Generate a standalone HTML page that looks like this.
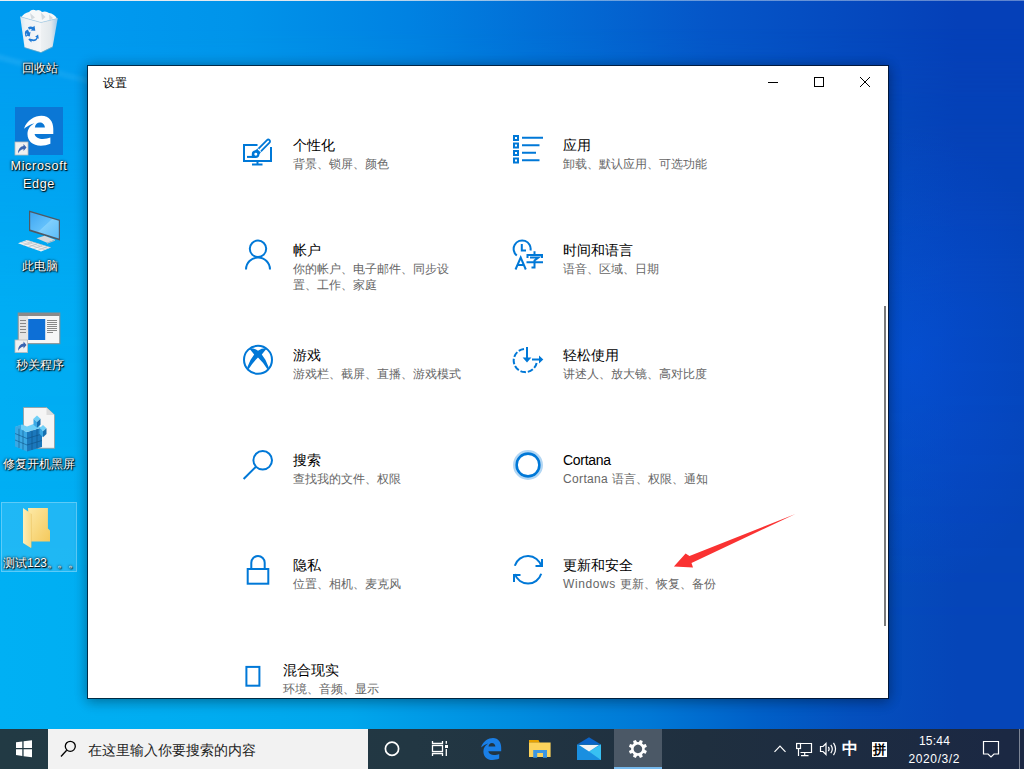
<!DOCTYPE html>
<html><head><meta charset="utf-8">
<style>
*{margin:0;padding:0;box-sizing:border-box}
html,body{width:1024px;height:769px;overflow:hidden}
body{position:relative;font-family:"Liberation Sans",sans-serif;background:#0a6fd6}
#bg{position:absolute;left:0;top:0;width:1024px;height:729px;
 background:linear-gradient(90deg,#009cf0 0px,#009af0 78px,#0094ea 238px,#0082e2 408px,#0556c8 708px,#0540b8 958px,#0540b8 1024px)}
#bg2{position:absolute;left:0;top:0;width:1024px;height:729px;
 background:linear-gradient(90deg,#00b0f4 0px,#00acf0 208px,#00a6ec 350px,#008ee0 508px,#0078d6 650px,#0060c8 758px,#0450be 850px,#0545b8 958px,#0545b8 1024px);
 -webkit-mask-image:linear-gradient(180deg,rgba(0,0,0,0) 28px,rgba(0,0,0,.55) 208px,rgba(0,0,0,.85) 308px,#000 628px,#000 729px);
 mask-image:linear-gradient(180deg,rgba(0,0,0,0) 28px,rgba(0,0,0,.55) 208px,rgba(0,0,0,.85) 308px,#000 628px,#000 729px)}
svg{position:absolute;left:0;top:0;overflow:visible}
#win{position:absolute;left:87px;top:65px;width:802px;height:634px;background:#fff;border:1px solid rgba(0,10,25,.72);background-clip:padding-box;box-shadow:0 0 12px rgba(0,0,0,.24),0 4px 12px rgba(0,0,0,.2)}
.t{position:absolute;white-space:nowrap;color:#000;font-size:14px;line-height:16px}
.s{position:absolute;white-space:nowrap;color:#666;font-size:12px;line-height:16px;margin-top:1px}
#taskbar{position:absolute;left:0;top:729px;width:1024px;height:40px;background:linear-gradient(90deg,#223a44 0px,#223743 414px,#1f2f3f 704px,#1b2843 1004px)}
.dl{position:absolute;color:#fff;font-size:12px;line-height:17px;text-align:center;text-shadow:0 0 2px rgba(0,0,0,.9),1px 1px 1px #000,0 0 3px rgba(0,0,0,.6);white-space:nowrap}
i{font-style:normal;display:inline-block;width:1em;text-align:center}
</style></head><body>
<div id="bg"></div><div id="bg2"></div><div style="position:absolute;left:0;top:0;width:1024px;height:729px;background:radial-gradient(ellipse 150px 230px at 915px 360px,rgba(6,84,230,.45),rgba(6,84,230,0))"></div>
<!-- DESKTOP ICONS -->
<div style="position:absolute;left:-20px;top:49px;width:140px;height:6px;background:linear-gradient(90deg,rgba(150,220,255,.14),rgba(150,220,255,.07));filter:blur(1.5px);transform:rotate(15deg);transform-origin:0 0"></div>
<div style="position:absolute;left:0;top:0;width:1024px;height:1px;background:linear-gradient(90deg,#e8eef2 0px,#dfe7ee 300px,rgba(200,215,235,.55) 600px,rgba(200,215,235,.45) 1024px)"></div>
<div style="position:absolute;left:1px;top:502px;width:76px;height:70px;background:rgba(255,255,255,.12);border:1px solid rgba(255,255,255,.28)"></div>
<svg width="1024" height="769" viewBox="0 0 1024 769">
 <!-- recycle bin -->
 <defs>
  <linearGradient id="rbl" x1="0" x2="1" y1="0" y2="0"><stop offset="0" stop-color="#d6e6f0"/><stop offset=".25" stop-color="#eef2f5"/><stop offset="1" stop-color="#f4f6f8"/></linearGradient>
  <linearGradient id="rbr" x1="0" x2="1" y1="0" y2="0"><stop offset="0" stop-color="#eef1f3"/><stop offset=".6" stop-color="#e2e8ec"/><stop offset="1" stop-color="#9cc8ea"/></linearGradient>
 </defs>
 <path fill="url(#rbl)" d="M20.2,16.7 L41,22.5 V52.3 L24.5,47.2 Z"/>
 <path fill="url(#rbr)" d="M41,22.5 L57.7,18.5 L52.7,46.6 L41,52.3 Z"/>
 <path fill="#f6f8f9" d="M21.5,17 Q24,13 29,12 Q32,8.5 36,10.5 Q39.5,9 42,12 Q46,10.5 49,13 Q54,13.5 57,18.5 L41,22.5 Z"/>
 <path fill="#d3dadf" d="M30,13 L35,17.5 L31.5,19.5 Z M41,12.5 L45.5,17 L42,20 Z M49,14.5 L53,18 L49.5,20.5 Z"/>
 <path fill="none" stroke="#b8cfe0" stroke-width=".7" d="M20.2,16.7 L41,22.5 L57.7,18.5"/>
 <path fill="#c9b8a8" d="M24.5,47.2 L41,52.3 L52.7,46.6 V47.6 L41,53 L24.5,48 Z" opacity=".5"/>
 <g fill="#1f7ad6">
  <path d="M28,27.2 Q30.5,25.8 33,27 L34.5,25.8 L35.3,30.8 L30.6,30.4 L32,29.2 Q30.3,28.5 29,29.8 Z"/>
  <path d="M25.3,31 L27.8,29.4 L29.3,32.6 L30.5,31.8 L29.8,36.4 L25.9,35.4 L27.3,34.6 Q26.6,33.4 26.6,33 Q25.9,34.8 26.8,37 L25.3,36.2 Q24.2,33.4 25.3,31 Z"/>
  <path d="M29.3,38.6 L33.8,39.4 Q36,39.4 36.6,37.2 L35.1,36.8 L38.1,34.4 L38.8,38.8 L37.6,38.3 Q36.6,41.2 33.4,41.2 L31.5,40.8 V42.4 L28.3,39.6 L31.4,37.2 Z"/>
 </g>
 <!-- edge tile -->
 <rect x="15" y="107" width="48" height="48" fill="#0b77d5"/>
 <path fill="#fff" transform="translate(24,115.8) scale(1.45,1.36) translate(-481,-738)" fill-rule="evenodd" d="M481,747.5 C483,741 488.5,738 493,738 C498.5,738 501.2,742.5 501.2,747.5 L501.2,751.3 L488.3,751.3 C488.8,753.8 491.2,755 494,755 C496,755 497.8,754.6 499.2,754 L499.2,758.6 C497.2,759.6 494.8,760 492.6,760 C487,760 483.4,756.4 483.4,751.4 C483.4,747.6 485.4,745 488.2,743.4 C485.2,744.3 482.6,746 481,747.5 Z M488.5,746.6 L495.4,746.6 C495.3,744.5 493.8,743 491.9,743 C490.1,743 488.8,744.4 488.5,746.6 Z"/>
 <rect x="15" y="142" width="13" height="13" fill="#f0f0f0" stroke="#bbb" stroke-width=".8"/>
 <path fill="#3a64b0" d="M18,153.5 Q18,147 23.5,146 V144 L26.5,147.5 L23.5,151 V149 Q20,149.5 18,153.5 Z"/>
 <!-- this pc -->
 <defs><linearGradient id="scr" x1="0" y1="0" x2="1" y2="1"><stop offset="0" stop-color="#3ea6f2"/><stop offset=".5" stop-color="#62c0fb"/><stop offset=".52" stop-color="#7fcffc"/><stop offset="1" stop-color="#5cbdf8"/></linearGradient></defs>
 <path fill="#4f5963" d="M29,210.5 L60,219.8 V240.5 L29,231 Z"/>
 <path fill="url(#scr)" d="M30.2,212.3 L58.8,220.8 V238.6 L30.2,229.6 Z"/>
 <path fill="#d5d9dc" d="M36.5,238.3 L44.5,235.8 L55,239.8 L47,242.8 Z"/>
 <path fill="#b9bfc4" d="M47,242.8 L55,239.8 V240.8 L47,243.8 Z"/>
 <path fill="#f2f3f4" d="M18,243.3 L27,240 L51,247.5 L41,251.5 Z"/>
 <path fill="none" stroke="#aab2b8" stroke-width=".55" d="M21,242.2 L45,249.8 M24,241.1 L48,248.6 M27,240.3 L50.5,247.6 M23,245.5 L32,242.3 M28,247.2 L37,244 M33,248.8 L42,245.6 M38,250.3 L47,247"/>
 <!-- app window -->
 <rect x="18.2" y="313" width="41.6" height="30.7" fill="#f6f6f6" stroke="#8a8a8a" stroke-width="1"/>
 <rect x="18.2" y="313" width="41.6" height="3" fill="#8a8a8a"/>
 <rect x="19" y="316" width="9" height="27" fill="#e4e4e4"/>
 <rect x="28.2" y="319" width="17" height="21" fill="#0d6fd6"/>
 <g fill="#888"><rect x="20" y="320" width="6" height="1"/><rect x="20" y="323" width="6" height="1"/><rect x="20" y="326" width="6" height="1"/><rect x="20" y="329" width="6" height="1"/><rect x="20" y="332" width="6" height="1"/>
 <rect x="47" y="320" width="10" height="1"/><rect x="47" y="322" width="10" height="1"/><rect x="47" y="324" width="10" height="1"/><rect x="47" y="326" width="10" height="1"/><rect x="47" y="328" width="10" height="1"/><rect x="47" y="330" width="10" height="1"/><rect x="47" y="332" width="6" height="1"/></g>
 <rect x="15" y="340" width="12.6" height="12.5" fill="#f0f0f0" stroke="#bbb" stroke-width=".8"/>
 <path fill="#3a64b0" d="M18,351 Q18,344.5 23.5,343.5 V341.5 L26.5,345 L23.5,348.5 V346.5 Q20,347 18,351 Z"/>
 <!-- registry doc -->
 <path fill="#f5f5f5" stroke="#9a9a9a" stroke-width=".8" d="M23.5,407.5 H46.5 L54.5,415 V448.3 H23.5 Z"/>
 <path fill="#dcdcdc" d="M46.5,407.5 V415 H54.5 Z"/>
 <g>
<path fill="#3aa8e4" d="M15,427 L27,432 V451.5 L15,446.5 Z"/>
<path fill="#1b78bc" d="M27,432 L42,427.5 V447 L27,451.5 Z"/>
<path fill="#6fd0f8" d="M15,427 L22,424.5 L27,426.5 L33.5,424 L42,427.5 L27,432 Z"/>
<path fill="#3aa8e4" d="M15,427 L21,424.7 V430 L15,432 Z"/>
<g stroke="#0d4f82" stroke-width=".7" opacity=".8" fill="none"><path d="M19,428.7 V448 M23,430.3 V449.8 M15,433.5 L27,438.5 L42,434 M15,440 L27,445 L42,440.5 M32,430.5 V450 M37,429 V448.5"/></g>
<path fill="#6fd0f8" d="M33.5,418.75 L37.0,415.6 L40.5,418.75 L37.0,421.90000000000003 Z"/><path fill="#3aa8e4" d="M33.5,418.75 L37.0,421.90000000000003 V427.85 L33.5,424.7 Z"/><path fill="#1670b0" d="M37.0,421.90000000000003 L40.5,418.75 V424.7 L37.0,427.85 Z"/>
<path fill="#6fd0f8" d="M39.5,428.15 L43.0,425 L46.5,428.15 L43.0,431.3 Z"/><path fill="#3aa8e4" d="M39.5,428.15 L43.0,431.3 V437.25 L39.5,434.09999999999997 Z"/><path fill="#1670b0" d="M43.0,431.3 L46.5,428.15 V434.09999999999997 L43.0,437.25 Z"/>
</g>
 <!-- folder -->
 <defs><linearGradient id="fg" x1="0" x2="1" y1="0" y2="1"><stop offset="0" stop-color="#fde9a6"/><stop offset="1" stop-color="#f4c95c"/></linearGradient>
 <linearGradient id="ff" x1="0" x2="1"><stop offset="0" stop-color="#fdeeb8"/><stop offset="1" stop-color="#f7dc8a"/></linearGradient></defs>
 <path fill="url(#fg)" d="M28,508 H47.9 V528.5 L50,530.5 V541.5 H30 Z"/>
 <path fill="url(#ff)" d="M23,508 L31,513.5 V548 L23,543 Z"/>
 <path fill="#e9c260" d="M31,513.5 V548 L31.8,547.3 V514.2 Z" opacity=".6"/>
 </svg>
<div class="dl" style="left:0;top:60px;width:79px"><i>回</i><i>收</i><i>站</i></div>
<div class="dl" style="left:-1px;top:158px;width:80px;font-size:12.6px;line-height:17.5px;letter-spacing:.65px">Microsoft<br>Edge</div>
<div class="dl" style="left:0;top:258px;width:79px"><i>此</i><i>电</i><i>脑</i></div>
<div class="dl" style="left:0;top:357px;width:79px"><i>秒</i><i>关</i><i>程</i><i>序</i></div>
<div class="dl" style="left:0;top:456px;width:78px"><i>修</i><i>复</i><i>开</i><i>机</i><i>黑</i><i>屏</i></div>
<div class="dl" style="left:3px;top:555px;text-align:left"><i>测</i><i>试</i>123<i>。</i><span style="margin-left:-2px"><i>。</i></span><span style="margin-left:-1px"><i>。</i></span></div>

<!-- WINDOW -->
<div id="win"></div>
<div class="t" style="left:103px;top:75px;font-size:12px"><i>设</i><i>置</i></div>

<div class="t" style="left:293px;top:137px"><i>个</i><i>性</i><i>化</i></div>
<div class="s" style="left:293px;top:155px"><i>背</i><i>景</i><i>、</i><i>锁</i><i>屏</i><i>、</i><i>颜</i><i>色</i></div>
<div class="t" style="left:563px;top:137px"><i>应</i><i>用</i></div>
<div class="s" style="left:563px;top:155px"><i>卸</i><i>载</i><i>、</i><i>默</i><i>认</i><i>应</i><i>用</i><i>、</i><i>可</i><i>选</i><i>功</i><i>能</i></div>

<div class="t" style="left:293px;top:242px"><i>帐</i><i>户</i></div>
<div class="s" style="left:293px;top:260px"><i>你</i><i>的</i><i>帐</i><i>户</i><i>、</i><i>电</i><i>子</i><i>邮</i><i>件</i><i>、</i><i>同</i><i>步</i><i>设</i><br><i>置</i><i>、</i><i>工</i><i>作</i><i>、</i><i>家</i><i>庭</i></div>
<div class="t" style="left:563px;top:242px"><i>时</i><i>间</i><i>和</i><i>语</i><i>言</i></div>
<div class="s" style="left:563px;top:260px"><i>语</i><i>音</i><i>、</i><i>区</i><i>域</i><i>、</i><i>日</i><i>期</i></div>

<div class="t" style="left:293px;top:347px"><i>游</i><i>戏</i></div>
<div class="s" style="left:293px;top:365px"><i>游</i><i>戏</i><i>栏</i><i>、</i><i>截</i><i>屏</i><i>、</i><i>直</i><i>播</i><i>、</i><i>游</i><i>戏</i><i>模</i><i>式</i></div>
<div class="t" style="left:563px;top:347px"><i>轻</i><i>松</i><i>使</i><i>用</i></div>
<div class="s" style="left:563px;top:365px"><i>讲</i><i>述</i><i>人</i><i>、</i><i>放</i><i>大</i><i>镜</i><i>、</i><i>高</i><i>对</i><i>比</i><i>度</i></div>

<div class="t" style="left:293px;top:452px"><i>搜</i><i>索</i></div>
<div class="s" style="left:293px;top:470px"><i>查</i><i>找</i><i>我</i><i>的</i><i>文</i><i>件</i><i>、</i><i>权</i><i>限</i></div>
<div class="t" style="left:563px;top:452px;letter-spacing:-.3px">Cortana</div>
<div class="s" style="left:563px;top:470px"><span style="letter-spacing:.35px">Cortana </span><i>语</i><i>言</i><i>、</i><i>权</i><i>限</i><i>、</i><i>通</i><i>知</i></div>

<div class="t" style="left:293px;top:557px"><i>隐</i><i>私</i></div>
<div class="s" style="left:293px;top:575px"><i>位</i><i>置</i><i>、</i><i>相</i><i>机</i><i>、</i><i>麦</i><i>克</i><i>风</i></div>
<div class="t" style="left:563px;top:557px"><i>更</i><i>新</i><i>和</i><i>安</i><i>全</i></div>
<div class="s" style="left:563px;top:575px"><span style="letter-spacing:.6px">Windows </span><i>更</i><i>新</i><i>、</i><i>恢</i><i>复</i><i>、</i><i>备</i><i>份</i></div>

<div class="t" style="left:283px;top:662px"><i>混</i><i>合</i><i>现</i><i>实</i></div>
<div class="s" style="left:283px;top:680px"><i>环</i><i>境</i><i>、</i><i>音</i><i>频</i><i>、</i><i>显</i><i>示</i></div>

<svg width="1024" height="769" viewBox="0 0 1024 769">
 <!-- title bar controls -->
 <g stroke="#000" stroke-width="1" fill="none">
  <line x1="768" y1="82.5" x2="778" y2="82.5"/>
  <rect x="814.5" y="77.5" width="9" height="9"/>
  <line x1="860" y1="77" x2="870" y2="87"/><line x1="870" y1="77" x2="860" y2="87"/>
 </g>
 <!-- scrollbar -->
 <rect x="884" y="306" width="2" height="320" fill="#7a7a7a"/>

 <g stroke="#0078d7" stroke-width="2" fill="none">
  <!-- personalization -->
  <path d="M257.5,145 H244 V161 H271 V147"/>
  <path d="M257.5,161 V164 M252,164.5 H262.5"/>
  <path stroke-width="1.8" d="M258.3,148.9 L267,140.2 A1.75,1.75 0 0 1 269.5,142.7 L260.9,151.3"/>
  <path d="M247,156.9 H255"/>
  <!-- apps -->
  <rect x="514" y="136" width="4" height="4"/>
  <rect x="514" y="143.5" width="4" height="4"/>
  <rect x="514" y="151" width="4" height="4"/>
  <rect x="514" y="158.5" width="4" height="4"/>
  <path d="M522,137.7 H543 M522,145.2 H539.5 M522,152.7 H536 M522,160.2 H539.5"/>
  <!-- accounts -->
  <circle cx="258" cy="248.8" r="8.2"/>
  <path d="M246,269.5 A12,12 0 0 1 270,269.5"/>
  <!-- time & language -->
  <path d="M516.8,255.5 A8.5,8.5 0 1 1 530.5,250.5"/>
  <path d="M521.8,244 V250.5 H526"/>
  <path d="M515.5,269.5 L520.7,257.5 L525.8,269.5 M517.5,265 H524"/>
  <path d="M534.5,251.3 V254 M527.5,258 V255 H542 V258 M530,257.5 H538.5 L534.5,260.5 V267.5 H531.5 M526.5,262.3 H543"/>
  <!-- gaming -->
  <circle cx="258" cy="359.8" r="14"/>
  <!-- ease -->
  <path d="M524,349 A11.6,11.6 0 1 0 536.8,362" stroke-dasharray="5.6 1.9"/>
  <path d="M527,347 V358"/>
  <path d="M532,359.5 H540"/>
  <!-- search -->
  <circle cx="262.7" cy="460.3" r="9.3"/>
  <path d="M243.6,479 L256,466.7"/>
  <!-- cortana -->
  <circle cx="528" cy="465" r="11.4" stroke-width="2.6"/>
  <circle cx="528" cy="465" r="13.8" stroke-width="2.4" opacity=".3"/>
  <!-- privacy -->
  <rect x="247.7" y="569" width="20.6" height="14.7"/>
  <path d="M251.3,569 V562.7 A6.7,6.7 0 0 1 264.7,562.7 V569"/>
  <!-- update -->
  <path d="M514.8,565.77 A13.8,13.8 0 0 1 541.33,566.23"/>
  <path d="M542,559 V566 H535.5"/>
  <path d="M541.2,573.83 A13.8,13.8 0 0 1 514.88,574.06"/>
  <path d="M520.5,575 H514 V582"/>
  <!-- mixed reality -->
  <rect x="246.4" y="666.9" width="13" height="18.8"/>
 </g>
 <g fill="#0078d7">
  <path fill-rule="evenodd" d="M251.8,154.2 A3.9,3.9 0 0 1 255.2,150.3 L258.2,148.3 L261.3,151.4 L259.5,154.3 A3.9,3.9 0 0 1 255.6,158 H251.8 Z M254.3,154.2 A1.5,1.5 0 1 0 257.3,154.2 A1.5,1.5 0 1 0 254.3,154.2 Z"/>
  <path fill="#fff" d="M257.6,149.4 L258.5,148.5 L261.2,151.2 L260.3,152.1 Z"/>
  <path d="M249.3,348.4 Q254,348 258,350.8 Q262,348 266.7,348.4 L261.8,354.6 Q266.3,360 268.8,367.4 L267.4,369.3 Q263,362.2 258,357.6 Q253,362.2 248.6,369.3 L247.2,367.4 Q249.7,360 254.2,354.6 Z"/>
  <path d="M522.6,357.6 H531.4 L527,362.4 Z"/>
  <path d="M539,355.5 V363.5 L543.3,359.5 Z"/>
 </g>

 <!-- red arrow -->
 <path fill="#fa3232" d="M795.4,513.9 L689.5,556 L685.6,553.4 L673.9,566.6 L693,567.6 L691.5,563 Z"/>
</svg>

<div id="taskbar"></div>
<div id="search" style="position:absolute;left:48px;top:729px;width:320px;height:40px;background:#f2f2f2"></div>
<div style="position:absolute;left:88px;top:742px;font-size:14px;line-height:16px;color:#222;white-space:nowrap"><i>在</i><i>这</i><i>里</i><i>输</i><i>入</i><i>你</i><i>要</i><i>搜</i><i>索</i><i>的</i><i>内</i><i>容</i></div>
<div style="position:absolute;left:614px;top:729px;width:48px;height:40px;background:#4b5866"></div>
<div style="position:absolute;left:614px;top:767px;width:48px;height:2px;background:#76b9ed"></div>
<div style="position:absolute;left:1019px;top:729px;width:1px;height:40px;background:#7d8595"></div>
<div style="position:absolute;left:904px;top:733px;width:61px;text-align:center;font-size:12px;line-height:16px;color:#fff;letter-spacing:.2px">15:44</div>
<div style="position:absolute;left:904px;top:751px;width:60px;text-align:center;font-size:12px;line-height:16px;color:#fff;letter-spacing:.6px;text-indent:.6px">2020/3/2</div>
<div style="position:absolute;left:842px;top:739px;font-size:16px;line-height:19px;color:#fff;font-weight:bold"><i>中</i></div>
<div style="position:absolute;left:872px;top:742px;width:15px;height:14.5px;background:#fff"></div>
<div style="position:absolute;left:872px;top:740.5px;width:15px;text-align:center;font-size:13px;line-height:17px;color:#000;font-weight:bold"><i>拼</i></div>
<svg width="1024" height="769" viewBox="0 0 1024 769">
 <!-- start -->
 <g fill="#fff">
  <path d="M16,742.3 L22.3,741.4 V748 H16 Z"/>
  <path d="M23.6,741.2 L32,740.2 V748 H23.6 Z"/>
  <path d="M16,749.2 H22.3 V756 L16,755.1 Z"/>
  <path d="M23.6,749.2 H32 V757.2 L23.6,756.2 Z"/>
 </g>
 <g stroke="#000" stroke-width="1.3" fill="none">
  <circle cx="70.3" cy="746.3" r="5"/>
  <path d="M61,756.5 L66.7,750.3"/>
 </g>
 <g stroke="#fff" fill="none">
  <circle cx="392" cy="748.7" r="6.6" stroke-width="1.7"/>
  <path stroke-width="1.3" d="M432.5,741 V743.5 H442.5 V741 M432.5,756 V753.5 H442.5 V756 M446.3,741 V743.8 M446.3,749 V756"/>
  <rect x="432.5" y="745.5" width="10" height="6" stroke-width="1.3"/>
 </g>
 <rect x="445" y="745" width="3" height="3" fill="#fff"/>
 <!-- edge -->
 <path fill="#1a7fe6" fill-rule="evenodd" d="M481,747.5 C483,741 488.5,738 493,738 C498.5,738 501.2,742.5 501.2,747.5 L501.2,751.3 L488.3,751.3 C488.8,753.8 491.2,755 494,755 C496,755 497.8,754.6 499.2,754 L499.2,758.6 C497.2,759.6 494.8,760 492.6,760 C487,760 483.4,756.4 483.4,751.4 C483.4,747.6 485.4,745 488.2,743.4 C485.2,744.3 482.6,746 481,747.5 Z M488.5,746.6 L495.4,746.6 C495.3,744.5 493.8,743 491.9,743 C490.1,743 488.8,744.4 488.5,746.6 Z"/>
 <!-- explorer -->
 <path fill="#e8a200" d="M529,740 H538.5 L539.8,742.7 H529 Z"/>
 <rect x="529" y="742.5" width="21.6" height="14.5" fill="#fcd35c"/>
 <path fill="#3d97e2" d="M533.2,750 H547 V757.8 H543 V753 H537.2 V757.8 H533.2 Z"/>
 <!-- mail -->
 <path fill="#0b63c6" d="M577,744.5 L589,737.3 L601,744.5 Z"/>
 <path fill="#1a8fe0" d="M577,744.5 H601 V760 H577 Z"/>
 <path fill="#38c0f2" d="M601,744.5 V760 L589,751.5 Z"/>
 <path fill="#f4f4f4" d="M579,745 H599 L589,751.5 Z"/>
 <!-- gear -->
 <g transform="translate(637.9,748.9) rotate(22.5)" fill="#fff">
  <circle r="6.8"/>
  <g id="tooth"><path d="M-1.9,-5.5 L-1.5,-9.1 H1.5 L1.9,-5.5 Z"/></g>
  <use href="#tooth" transform="rotate(45)"/><use href="#tooth" transform="rotate(90)"/><use href="#tooth" transform="rotate(135)"/>
  <use href="#tooth" transform="rotate(180)"/><use href="#tooth" transform="rotate(225)"/><use href="#tooth" transform="rotate(270)"/><use href="#tooth" transform="rotate(315)"/>
  <circle r="4.3" fill="#4b5866"/>
 </g>
 <!-- tray -->
 <g stroke="#fff" stroke-width="1.2" fill="none">
  <path d="M774.5,751.8 L780,746.2 L785.5,751.8"/>
  <path d="M800.5,743.5 H811.5 V752.5 H800.5"/>
  <rect x="796.6" y="743.5" width="3.9" height="5"/>
  <path d="M798.5,748.5 V756 M804.7,752.5 V755.5 M801,755.7 H808.5"/>
  <path d="M820.5,746.5 H823 L826,743.5 V754.5 L823,751.5 H820.5 Z"/>
  <path d="M828.3,746.8 Q830,749 828.3,751.2"/>
  <path d="M830.8,744.8 Q833.8,749 830.8,753.2"/>
  <path d="M833.5,742.8 Q837.6,749 833.5,755.2"/>
  <path d="M983.5,741.5 H998.5 V754 H994 L991,757 L988,754 H983.5 Z"/>
 </g>
</svg>
</body></html>
